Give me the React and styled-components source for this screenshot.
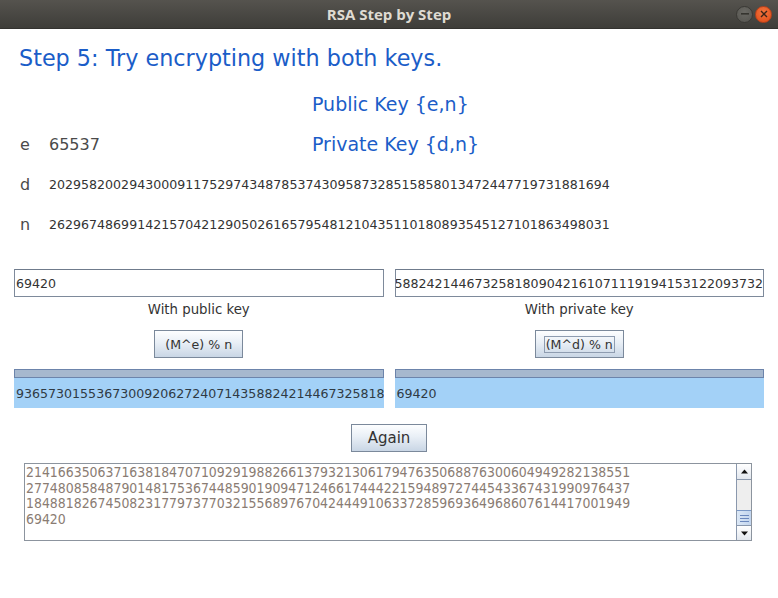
import React from "react";
import styled, { createGlobalStyle } from "styled-components";

const Global = createGlobalStyle`
  html, body { margin: 0; padding: 0; background: #ffffff; }
  body { width: 778px; height: 598px; overflow: hidden; font-family: "DejaVu Sans", sans-serif; }
  * { box-sizing: border-box; }
`;

const Window = styled.div`
  width: 778px;
  height: 598px;
  display: flex;
  flex-direction: column;
  background: #ffffff;
`;

const TitleBar = styled.div`
  height: 29px;
  flex: none;
  display: grid;
  grid-template-columns: 1fr auto 1fr;
  align-items: center;
  background: linear-gradient(#55534e, #3e3d39);
  border-bottom: 1px solid #33322f;
`;

const Title = styled.div`
  grid-column: 2;
  font-family: "Open Sans", "DejaVu Sans", sans-serif;
  font-weight: 700;
  font-size: 15px;
  color: #dfdbd2;
`;

const WinButtons = styled.div`
  grid-column: 3;
  justify-self: end;
  display: flex;
  gap: 2px;
  padding-right: 6px;
`;

const WinButton = styled.div`
  width: 17px;
  height: 17px;
  border-radius: 50%;
  display: flex;
  align-items: center;
  justify-content: center;
  background: ${(p) => (p.$close ? "radial-gradient(circle at 50% 35%, #f3753f, #df4a16)" : "radial-gradient(circle at 50% 35%, #6a6964, #55544f)")};
  border: 1px solid ${(p) => (p.$close ? "#b9411a" : "#3a3935")};
`;

const Content = styled.div`
  flex: 1;
  display: flex;
  flex-direction: column;
  padding: 16px 14px 0 14px;
`;

const Heading = styled.h1`
  margin: 0 0 0 5px;
  font-weight: normal;
  font-size: 22.3px;
  line-height: 26px;
  color: #1b5dc8;
`;

const KeyTitleRow = styled.div`
  margin-top: 13px;
  height: 40px;
  display: flex;
  align-items: center;
  padding-left: 298px;
`;

const KeyTitle = styled.div`
  font-size: 19px;
  color: #1b5dc8;
  white-space: nowrap;
`;

const KeyRow = styled.div`
  height: 40px;
  display: flex;
  align-items: center;
  padding-left: 6px;
`;

const KeyLabel = styled.div`
  width: 29px;
  flex: none;
  font-size: 16px;
  color: #4a4a4a;
`;

const KeyValue = styled.div`
  width: ${(p) => (p.$short ? "263px" : "auto")};
  flex: none;
  font-size: ${(p) => (p.$short ? "16px" : "12.6px")};
  color: ${(p) => (p.$short ? "#4a4a4a" : "#333333")};
  white-space: nowrap;
`;

const Columns = styled.div`
  margin-top: 25px;
  display: grid;
  grid-template-columns: 1fr 1fr;
  column-gap: 11px;
`;

const Column = styled.div`
  display: flex;
  flex-direction: column;
  align-items: stretch;
  min-width: 0;
`;

const Field = styled.div`
  height: 28px;
  border: 1px solid #7e8a9b;
  border-top-color: #6f7b8c;
  background: #ffffff;
  display: flex;
  align-items: center;
  justify-content: ${(p) => (p.$end ? "flex-end" : "flex-start")};
  overflow: hidden;
  padding: 0 ${(p) => (p.$end ? 0 : 1)}px 0 1px;
  font-size: 12.6px;
  color: #333333;
  white-space: nowrap;
`;

const Caption = styled.div`
  height: 24px;
  line-height: 25px;
  text-align: center;
  font-size: 13.3px;
  color: #333333;
`;

const Button = styled.div`
  align-self: center;
  width: ${(p) => p.$w}px;
  height: 28px;
  margin-top: ${(p) => p.$mt}px;
  border: 1px solid #7b899b;
  background: linear-gradient(#fdfeff 0%, #e9eff6 45%, #c9d6e5 100%);
  display: flex;
  align-items: center;
  justify-content: center;
  font-size: ${(p) => p.$fs || 12.6}px;
  color: #333333;
  white-space: nowrap;
`;

const Focus = styled.span`
  border: 1px solid #8e9cb0;
  padding: 0 1px;
  line-height: 15px;
`;

const ResultBar = styled.div`
  margin-top: 11px;
  height: 9px;
  border: 1px solid #6c84ab;
  background: #a6b8ce;
`;

const Result = styled.div`
  height: 30px;
  background: #a3d1f7;
  display: flex;
  align-items: center;
  padding-left: 2px;
  overflow: hidden;
  white-space: nowrap;
  font-size: 12.6px;
  color: #2f3a44;
`;

const AgainRow = styled.div`
  display: flex;
  justify-content: center;
`;

const TextArea = styled.div`
  margin: 11px 12px 0 10px;
  height: 78px;
  border: 1px solid #8c949e;
  display: flex;
  background: #ffffff;
`;

const Lines = styled.div`
  flex: 1;
  padding: 1px 0 0 1px;
  font-family: "DejaVu Sans Condensed", "Liberation Sans Narrow", "Liberation Sans", sans-serif;
  font-size: 13.9px;
  line-height: 15.6px;
  color: #8a7c73;
  white-space: pre;
  overflow: hidden;
`;

const ScrollBar = styled.div`
  width: 15px;
  flex: none;
  border-left: 1px solid #8a98ad;
  display: flex;
  flex-direction: column;
  background: #eeeeee;
`;

const ArrowBtn = styled.div`
  height: ${(p) => p.$h}px;
  flex: none;
  background: linear-gradient(#ffffff, #e2e7ee);
  border-bottom: ${(p) => (p.$top ? "1px solid #8a98ad" : "none")};
  border-top: ${(p) => (p.$top ? "none" : "1px solid #8a98ad")};
  display: flex;
  align-items: center;
  justify-content: center;
`;

const Track = styled.div`
  flex: 1;
  display: flex;
  flex-direction: column;
  justify-content: flex-end;
`;

const Thumb = styled.div`
  height: 15px;
  background: linear-gradient(90deg, #dce8f6, #c2d5ee);
  border-top: 1px solid #7a98c6;
  display: flex;
  flex-direction: column;
  align-items: center;
  justify-content: center;
  gap: 2px;
`;

const Grip = styled.div`
  width: 9px;
  height: 1px;
  background: #6b88bd;
`;

const cipher = "936573015536730092062724071435882421446732581809042161071119194153122093732";

const lines = [
  "2141663506371638184707109291988266137932130617947635068876300604949282138551",
  "2774808584879014817536744859019094712466174442215948972744543367431990976437",
  "1848818267450823177973770321556897670424449106337285969364968607614417001949",
  "69420",
].join("\n");

export default function App() {
  return (
    <>
      <Global />
      <Window>
        <TitleBar>
          <Title>RSA Step by Step</Title>
          <WinButtons>
            <WinButton>
              <svg width="8" height="2" viewBox="0 0 8 2">
                <rect x="0" y="0" width="8" height="1.6" fill="#35342f" />
              </svg>
            </WinButton>
            <WinButton $close>
              <svg width="8" height="8" viewBox="0 0 8 8">
                <path d="M1 1 L7 7 M7 1 L1 7" stroke="#3b2418" strokeWidth="1.4" />
              </svg>
            </WinButton>
          </WinButtons>
        </TitleBar>
        <Content>
          <Heading>Step 5: Try encrypting with both keys.</Heading>
          <KeyTitleRow>
            <KeyTitle>Public Key {"{e,n}"}</KeyTitle>
          </KeyTitleRow>
          <KeyRow>
            <KeyLabel>e</KeyLabel>
            <KeyValue $short>65537</KeyValue>
            <KeyTitle>Private Key {"{d,n}"}</KeyTitle>
          </KeyRow>
          <KeyRow>
            <KeyLabel>d</KeyLabel>
            <KeyValue>2029582002943000911752974348785374309587328515858013472447719731881694</KeyValue>
          </KeyRow>
          <KeyRow>
            <KeyLabel>n</KeyLabel>
            <KeyValue>2629674869914215704212905026165795481210435110180893545127101863498031</KeyValue>
          </KeyRow>
          <Columns>
            <Column>
              <Field>69420</Field>
              <Caption>With public key</Caption>
              <Button $w={89} $mt={9}>(M^e) % n</Button>
              <ResultBar />
              <Result>{cipher}</Result>
            </Column>
            <Column>
              <Field $end>
                <span>{cipher}</span>
              </Field>
              <Caption>With private key</Caption>
              <Button $w={89} $mt={9}>
                <Focus>(M^d) % n</Focus>
              </Button>
              <ResultBar />
              <Result>69420</Result>
            </Column>
          </Columns>
          <AgainRow>
            <Button $w={76} $mt={16} $fs={15}>Again</Button>
          </AgainRow>
          <TextArea>
            <Lines>{lines}</Lines>
            <ScrollBar>
              <ArrowBtn $top $h={16}>
                <svg width="7" height="5" viewBox="0 0 7 5">
                  <path d="M0 4.5 L3.5 0.5 L7 4.5 Z" fill="#111" />
                </svg>
              </ArrowBtn>
              <Track>
                <Thumb>
                  <Grip />
                  <Grip />
                  <Grip />
                </Thumb>
              </Track>
              <ArrowBtn $h={15}>
                <svg width="7" height="5" viewBox="0 0 7 5">
                  <path d="M0 0.5 L3.5 4.5 L7 0.5 Z" fill="#111" />
                </svg>
              </ArrowBtn>
            </ScrollBar>
          </TextArea>
        </Content>
      </Window>
    </>
  );
}
